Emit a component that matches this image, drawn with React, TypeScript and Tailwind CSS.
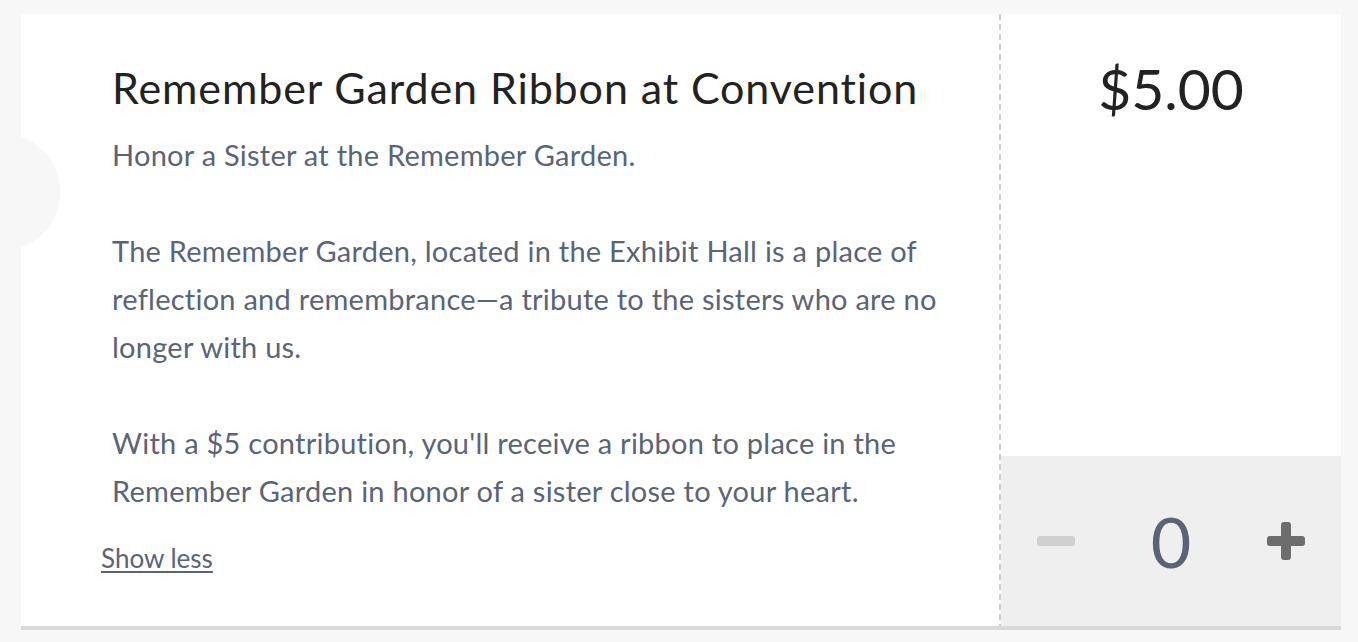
import React, { useState } from 'react';

export default function App() {
  const [qty, setQty] = useState(0);
  const [expanded, setExpanded] = useState(true);

  return (
    <div className="min-h-screen bg-[#f7f7f7] pl-[21px] pt-[14px] font-['Lato','Noto_Sans',sans-serif]">
      <div className="relative flex h-[616px] w-[1320px] border-b-4 border-[#d9d9d9] bg-white">
        {/* ticket notch */}
        <div className="absolute left-[-79px] top-[119px] h-[118px] w-[118px] rounded-full bg-[#f7f7f7]" />

        {/* Description */}
        <div className="relative flex-1 pl-[91px] pt-[50px]">
          <h2 className="text-[43px] leading-[48px] tracking-[0.9px] text-[#222222]">Remember Garden Ribbon at Convention</h2>
          <p className="mt-[19px] w-[835px] text-[29px] leading-[48px] tracking-[0.25px] text-[#5a6478]">
            Honor a Sister at the Remember Garden.
            <br />
            <br />
            The Remember Garden, located in the Exhibit Hall is a place of reflection and remembrance—a tribute to the sisters who are no longer with us.
            {expanded && (
              <>
                <br />
                <br />
                With a $5 contribution, you'll receive a ribbon to place in the Remember Garden in honor of a sister close to your heart.
              </>
            )}
          </p>
          <button
            onClick={() => setExpanded(!expanded)}
            className="-ml-[11px] mt-[27px] text-[26px] leading-[32px] text-[#5a6478] underline underline-offset-[3px]"
          >
            {expanded ? 'Show less' : 'Show more'}
          </button>
        </div>

        {/* dashed divider */}
        <div className="w-[2px] bg-[repeating-linear-gradient(to_bottom,#cfcfcf_0px,#cfcfcf_6px,transparent_6px,transparent_10px)]" />

        {/* Price + quantity */}
        <div className="flex w-[340px] flex-col">
          <div className="flex flex-1 justify-center pt-[42px]">
            <span className="text-[57px] leading-[64px] text-[#222222]">$5.00</span>
          </div>
          <div className="flex h-[170px] items-center justify-between bg-[#efefef] px-[36px]">
            <button onClick={() => setQty(Math.max(0, qty - 1))} className="flex h-[38px] w-[38px] items-center">
              <span className="h-[10px] w-[38px] rounded-[3px] bg-[#d0d0d0]" />
            </button>
            <span className="text-[70px] leading-[80px] text-[#5a6478]">{qty}</span>
            <button onClick={() => setQty(qty + 1)} className="relative h-[38px] w-[38px]">
              <span className="absolute left-0 top-[14px] h-[10px] w-[38px] rounded-[3px] bg-[#6d6d6d]" />
              <span className="absolute left-[14px] top-0 h-[38px] w-[10px] rounded-[3px] bg-[#6d6d6d]" />
            </button>
          </div>
        </div>
      </div>
    </div>
  );
}
